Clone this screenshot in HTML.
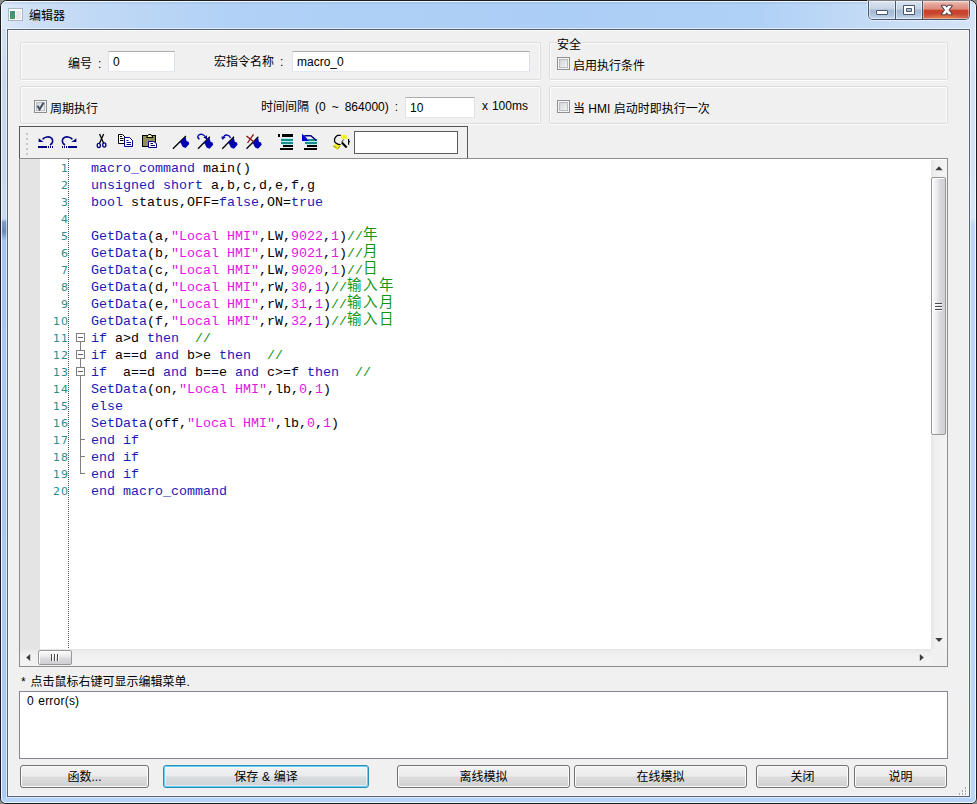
<!DOCTYPE html>
<html lang="zh-CN">
<head>
<meta charset="utf-8">
<title>编辑器</title>
<style>
html,body{margin:0;padding:0;}
body{width:977px;height:804px;overflow:hidden;background:#8c8c8c;position:relative;
 font-family:"Liberation Sans","Noto Sans CJK SC",sans-serif;font-size:12px;color:#000;word-spacing:2.67px;}
.abs{position:absolute;}
#frame{position:absolute;left:0;top:0;width:977px;height:804px;box-sizing:border-box;
 border:1px solid #1a1c22;border-radius:7px 7px 6px 6px;overflow:hidden;
 background:#b3d1f4;}
#frame:after{content:"";position:absolute;left:0;top:0;right:0;bottom:0;border:1px solid rgba(255,255,255,.8);border-radius:6px 6px 5px 5px;}
#titlegrad{position:absolute;left:0;top:0;width:975px;height:29px;
 background:linear-gradient(90deg,#dde9f8 0px,#cde0f6 30px,#c1d9f5 90px,#b1d1f6 230px,#abcef6 560px,#b0d1f6 760px,#c6dcf5 880px,#d6e5f7 975px);}
#titleshine{position:absolute;left:0;top:1px;width:975px;height:2px;background:rgba(120,150,190,.16);}
#sideL{position:absolute;left:0;top:28px;width:6px;height:774px;background:linear-gradient(180deg,#d2e0f2 0,#c6d8ee 60px,#c8daf0 188px,#c6d8ee 190px,#7d9cc6 193px,#6b8bb8 203px,#8eafd9 208px,#a6c6f1 212px,#abcbf4 774px);}
#sideR{position:absolute;left:969px;top:28px;width:6px;height:774px;background:linear-gradient(180deg,#d8e6f7 0,#d2e2f7 80px,#d6e5f8 188px,#d0e1f6 191px,#bcd8f6 195px,#b8d6f6 774px);}
#bottomG{position:absolute;left:0;top:797px;width:975px;height:5px;background:#b4d3f6;}
#client{position:absolute;left:7px;top:29px;width:963px;height:768px;box-sizing:border-box;
 border:1px solid #56637a;background:#f0f0f0;box-shadow:0 0 0 1px rgba(255,255,255,.55),inset 0 0 0 1px #f8f8f8;}
.lbl{position:absolute;white-space:nowrap;line-height:14px;height:14px;margin-top:1px;}
.gb{position:absolute;box-sizing:border-box;border:1px solid #dcdcdc;border-radius:2px;box-shadow:inset 1px 1px 0 #fcfcfc,inset -1px 0 0 #fcfcfc,0 1px 0 #fcfcfc;}
.inp{position:absolute;box-sizing:border-box;background:#fff;border:1px solid #e3e9ef;border-top-color:#abadb3;border-left-color:#e2e3ea;border-right-color:#dbdfe6;
 line-height:20px;padding-left:4px;white-space:nowrap;}
.cb{position:absolute;width:13px;height:13px;box-sizing:border-box;border:1px solid #8e8f8f;background:#f4f4f4;}
.cb i{position:absolute;left:1px;top:1px;width:9px;height:9px;box-sizing:border-box;border:1px solid #b8bcc0;background:linear-gradient(135deg,#d2d5d8 0,#f3f3f3 100%);}
.btn{word-spacing:0.4px;position:absolute;box-sizing:border-box;height:23px;border:1px solid #707070;border-radius:3px;
 background:linear-gradient(180deg,#f2f2f2 0,#ebebeb 48%,#dddddd 52%,#cfcfcf 100%);box-shadow:inset 0 0 0 1px #fcfcfc;
 text-align:center;line-height:23px;white-space:nowrap;overflow:hidden;}
.btn.def{border-color:#2e8cba;box-shadow:inset 0 0 0 1px #62d2f4,inset 0 0 0 2px rgba(255,255,255,.45);background:linear-gradient(180deg,#f1f3f4 0,#e9ebed 48%,#d9dde0 52%,#ccd2d6 100%);}
#editor{position:absolute;left:19px;top:158px;width:929px;height:509px;box-sizing:border-box;border:1px solid #8e8e8e;background:#fff;overflow:hidden;}
#code{word-spacing:0;position:absolute;left:0;top:0;font-family:"Liberation Mono","Noto Sans CJK SC",monospace;font-size:13.33px;}
.ln{position:absolute;left:0;width:49px;letter-spacing:1px;text-align:right;height:17px;line-height:17px;color:#2b8c8c;
 font-family:"DejaVu Sans","Liberation Sans",sans-serif;font-size:11px;}
.cl{position:absolute;left:71px;height:17px;line-height:17px;white-space:pre;color:#000;}
.z{font-size:14.5px;letter-spacing:1.5px;line-height:17px;position:relative;top:-1px;}
.k{color:#1a1ab8;} .s{color:#e614e6;} .n{color:#e614e6;} .c{color:#149614;}
</style>
</head>
<body>
<div id="frame">
 <div id="titlegrad"></div><div id="titleshine"></div>
 <div id="sideL"></div><div id="sideR"></div><div id="bottomG"></div>
</div>
<div id="client"></div>


<!-- app icon -->
<div class="abs" style="left:8px;top:8px;width:15px;height:13px;box-sizing:border-box;border:1px solid #aab6c4;background:#fafcfc;"></div>
<div class="abs" style="left:10px;top:11px;width:5px;height:8px;background:linear-gradient(180deg,#3f8f78,#4a9a66);"></div>
<div class="abs" style="left:16px;top:11px;width:5px;height:8px;background:#e6e8ea;"></div>
<!-- caption buttons -->
<div class="abs" id="capbtns" style="left:868px;top:1px;width:102px;height:19px;box-sizing:border-box;border:1px solid #46566e;border-top:none;border-radius:0 0 5px 5px;overflow:hidden;box-shadow:0 0 0 1px rgba(255,255,255,.45);">
 <div class="abs" style="left:0;top:0;width:26px;height:18px;background:linear-gradient(180deg,#dbe5f1 0,#c3d2e4 45%,#a3b9d3 50%,#b0c6de 80%,#cadbec 100%);box-shadow:inset 0 0 0 1px rgba(255,255,255,.5);"></div>
 <div class="abs" style="left:26px;top:0;width:1px;height:18px;background:#46566e;"></div>
 <div class="abs" style="left:27px;top:0;width:26px;height:18px;background:linear-gradient(180deg,#dbe5f1 0,#c3d2e4 45%,#a3b9d3 50%,#b0c6de 80%,#cadbec 100%);box-shadow:inset 0 0 0 1px rgba(255,255,255,.5);"></div>
 <div class="abs" style="left:53px;top:0;width:1px;height:18px;background:#46566e;"></div>
 <div class="abs" style="left:54px;top:0;width:46px;height:18px;background:radial-gradient(ellipse 20px 6px at 45% 100%,rgba(230,140,60,.75),rgba(230,140,60,0) 100%),linear-gradient(180deg,#f0c8c0 0,#e3a298 20%,#dc8a78 45%,#c8412e 52%,#c9452f 72%,#d8745c 100%);box-shadow:inset 0 0 0 1px rgba(255,255,255,.4);"></div>
</div>
<svg class="abs" style="left:868px;top:0;" width="102" height="20" viewBox="868 0 102 20">
 <rect x="876.500" y="10.500" width="11" height="4" fill="#fff" stroke="#4a566a" stroke-width="1" rx="0.5"/>
 <path d="M903.500 5.500 H914.500 V14.500 H903.500 Z M906.500 8.500 V11.500 H911.500 V8.500 Z" fill="#fff" fill-rule="evenodd" stroke="#4a566a" stroke-width="1"/>
 <path d="M941.9 5.8 L945.3 5.8 L951.7 14.2 L948.3 14.2 Z M948.3 5.8 L951.7 5.8 L945.3 14.2 L941.9 14.2 Z" fill="none" stroke="#54404a" stroke-width="2" stroke-linejoin="round"/><path d="M941.9 5.8 L945.3 5.8 L951.7 14.2 L948.3 14.2 Z M948.3 5.8 L951.7 5.8 L945.3 14.2 L941.9 14.2 Z" fill="#fff"/>
</svg>
<!-- title -->
<div class="lbl" style="left:29px;top:8px;">编辑器</div>

<!-- group boxes -->
<div class="gb" style="left:20px;top:42px;width:521px;height:38px;"></div>
<div class="gb" style="left:20px;top:86px;width:521px;height:38px;"></div>
<div class="gb" style="left:549px;top:42px;width:399px;height:38px;"></div>
<div class="gb" style="left:549px;top:86px;width:399px;height:38px;"></div>

<div class="lbl" style="left:68px;top:56px;">编号 :</div>
<div class="inp" style="left:108px;top:51px;width:67px;height:21px;">0</div>
<div class="lbl" style="left:214px;top:54px;">宏指令名称 :</div>
<div class="inp" style="left:292px;top:51px;width:238px;height:21px;">macro_0</div>

<div class="lbl" style="left:557px;top:37px;background:#f0f0f0;">安全</div>
<div class="cb" style="left:557px;top:57px;"><i></i></div>
<div class="lbl" style="left:573px;top:58px;">启用执行条件</div>

<div class="cb" style="left:34px;top:100px;"><i></i><svg class="abs" style="left:0;top:0" width="11" height="11" viewBox="0 0 11 11"><path d="M2.500 4.800 L4.600 8.300 L8.600 1.800" fill="none" stroke="#414d66" stroke-width="1.9"/></svg></div>
<div class="lbl" style="left:50px;top:101px;">周期执行</div>
<div class="lbl" style="left:261px;top:99px;">时间间隔 (0 ~ 864000) :</div>
<div class="inp" style="left:405px;top:97px;width:70px;height:21px;">10</div>
<div class="lbl" style="left:482px;top:98px;word-spacing:0.6px;">x 100ms</div>
<div class="cb" style="left:557px;top:100px;"><i></i></div>
<div class="lbl" style="left:573px;top:101px;word-spacing:0;">当 HMI 启动时即执行一次</div>

<!-- toolbar -->
<div class="abs" id="toolbar" style="left:19px;top:126px;width:449px;height:33px;box-sizing:border-box;border:1px solid #565656;border-bottom:none;background:#f0f0f0;"></div>

<div class="abs" id="tbinput" style="left:354px;top:131px;width:104px;height:23px;box-sizing:border-box;border:1px solid #5c5c5c;background:#fff;"></div>
<svg class="abs" style="left:0;top:0;" width="977" height="804" viewBox="0 0 977 804">
<!-- gripper -->
<g fill="#c6c6c6"><rect x="26" y="133" width="2" height="2"/><rect x="26" y="138" width="2" height="2"/><rect x="26" y="143" width="2" height="2"/><rect x="26" y="148" width="2" height="2"/><rect x="26" y="153" width="2" height="2"/></g>
<!-- undo -->
<g id="undo">
<path d="M42.600 139.400 C44 136.800 49.500 135.900 51.800 138.400 C53.600 140.800 52.600 143.400 50 145" fill="none" stroke="#000080" stroke-width="1.6"/>
<path d="M38.600 138.300 L38.600 142 L43.600 142 Z" fill="#000080"/>
<rect x="38" y="146" width="9" height="2" fill="#000080"/>
<rect x="48" y="146" width="1" height="2" fill="#000080"/><rect x="50" y="146" width="1" height="2" fill="#000080"/><rect x="52" y="146" width="1" height="2" fill="#000080"/>
</g>
<!-- redo (mirror about x=57.5) -->
<g transform="translate(115,0) scale(-1,1)">
<path d="M42.600 139.400 C44 136.800 49.500 135.900 51.800 138.400 C53.600 140.800 52.600 143.400 50 145" fill="none" stroke="#000080" stroke-width="1.6"/>
<path d="M38.600 138.300 L38.600 142 L43.600 142 Z" fill="#000080"/>
<rect x="38" y="146" width="9" height="2" fill="#000080"/>
<rect x="48" y="146" width="1" height="2" fill="#000080"/><rect x="50" y="146" width="1" height="2" fill="#000080"/><rect x="52" y="146" width="1" height="2" fill="#000080"/>
</g>
<!-- cut -->
<g fill="none" stroke-width="1.3">
<path d="M99.600 134 L103.700 143.400 M103.700 134 L99.400 143.400" stroke="#000"/>
<ellipse cx="98.800" cy="145.500" rx="1.600" ry="2.100" stroke="#000080"/>
<ellipse cx="104.300" cy="145" rx="1.600" ry="2.100" stroke="#000080"/>
</g>
<!-- copy -->
<g stroke-width="1">
<path d="M118.500 134.500 H122.500 L125.500 137.500 V143.500 H118.500 Z" fill="#fff" stroke="#000"/>
<path d="M120 136.500 H122 M120 138.500 H123.500 M120 140.500 H123.500" stroke="#000"/>
<path d="M124.500 137.500 H129.500 L132.500 140.500 V146.500 H124.500 Z" fill="#fff" stroke="#000080"/>
<path d="M126.500 140.500 H128.500 M126.500 142.500 H131 M126.500 144.500 H131" stroke="#000080"/>
</g>
<!-- paste -->
<g stroke-width="1">
<rect x="142.500" y="135.500" width="13" height="11" fill="#8e8e58" stroke="#000"/>
<path d="M146.500 137.500 L148.500 134.500 H151 L153 137.500 Z" fill="#f6f6b8" stroke="#000"/>
<path d="M148.500 141.500 H153.500 L156.500 143.500 V147.500 H148.500 Z" fill="#fff" stroke="#000080"/>
<path d="M150.500 143.500 H153 M150.500 145.500 H155" stroke="#000080"/>
</g>
<!-- flag 1 -->
<g id="flag">
<path d="M172.900 148.700 L185.900 136" stroke="#000" stroke-width="1.3" fill="none"/>
<path d="M185.5 136.8 L186.5 141.0 L188.6 141.8 L189.2 144.0 L185.6 147.9 L182.6 146.8 L181.0 143.4 L180.0 141.9 Z" fill="#0000b4"/>
</g>
<!-- flag 2: next -->
<g>
<path d="M198 148.700 L209.800 136.800" stroke="#000" stroke-width="1.3" fill="none"/>
<path d="M209.5 137.6 L210.5 141.8 L212.6 142.6 L213.2 144.8 L209.6 148.7 L206.6 147.6 L205.0 144.2 L204.0 142.7 Z" fill="#0000b4"/>
<path d="M199.500 139.300 C196 137 198.500 133.800 202 134.300 C203.500 134.600 204.500 135.500 205 136.500" stroke="#0000a0" stroke-width="1.3" fill="none"/>
<path d="M203.300 137.600 L207 135.200 L207 139.400 Z" fill="#0000a0"/>
</g>
<!-- flag 3: prev -->
<g>
<path d="M222.300 148.700 L234 136.800" stroke="#000" stroke-width="1.3" fill="none"/>
<path d="M233.8 137.6 L234.8 141.8 L236.9 142.6 L237.5 144.8 L233.9 148.7 L230.9 147.6 L229.3 144.2 L228.3 142.7 Z" fill="#0000b4"/>
<path d="M223.500 137 C225 134 229.500 134.500 230.500 138" stroke="#0000b4" stroke-width="1.3" fill="none"/>
<path d="M221.300 136.500 L225.800 137 L222.300 140 Z" fill="#0000b4"/>
</g>
<!-- flag 4: clear -->
<g>
<path d="M246.500 148.700 L258.300 136.800" stroke="#000" stroke-width="1.3" fill="none"/>
<path d="M258.0 137.6 L259.0 141.8 L261.1 142.6 L261.7 144.8 L258.1 148.7 L255.1 147.6 L253.5 144.2 L252.5 142.7 Z" fill="#0000b4"/>
<path d="M246.500 136 L254 142 M253.500 134.300 L247.500 143" stroke="#8c1010" stroke-width="1.3" fill="none"/>
</g>
<!-- indent -->
<g shape-rendering="crispEdges">
<rect x="278" y="134" width="2" height="3" fill="#000"/>
<rect x="282" y="134" width="11" height="3" fill="#000"/>
<rect x="281" y="138" width="12" height="7" fill="#b4f2f2"/>
<rect x="281" y="139" width="12" height="2" fill="#1a8c8c"/>
<rect x="281" y="142" width="12" height="2" fill="#1a8c8c"/>
<rect x="283" y="145" width="10" height="2" fill="#000"/>
<rect x="280" y="148" width="13" height="2" fill="#000"/>
</g>
<!-- outdent -->
<g>
<g shape-rendering="crispEdges">
<rect x="305" y="141" width="12" height="4" fill="#b4f2f2"/>
<rect x="308" y="139" width="9" height="2" fill="#1a8c8c"/>
<rect x="305" y="142" width="12" height="2" fill="#1a8c8c"/>
<rect x="307" y="145" width="10" height="2" fill="#000"/>
<rect x="304" y="148" width="13" height="2" fill="#000"/>
</g>
<path d="M302 133.800 L302 140.900 L308.800 140.900 L306.600 138 L304.800 136.200 Z" fill="#0000d0"/>
<path d="M304.300 135.700 H310.800 L316.400 140.500" fill="none" stroke="#000080" stroke-width="1.500"/>
</g>
<!-- find/replace -->
<g fill="none">
<path d="M341.500 134.500 L346.500 135.300 L348.200 139.600 L345.200 138.600 L343 139.800 L341.300 138.200 Z" fill="#f2f224"/>
<path d="M332.800 145.600 L337 143.400 L340.600 144.800 L339.200 148.200 L336.200 149.600 Z" fill="#f2f224"/>
<path d="M340.800 135.300 L337.600 135.300 C335.200 137 334.200 139.400 334.600 141.400 C335.400 143.400 337.400 144.200 340.600 144.600" stroke="#000" stroke-width="1.3"/>
<path d="M341.800 142.400 L346.700 147.500" stroke="#000" stroke-width="2.1"/>
<path d="M343.600 139.600 L341.600 142.200" stroke="#222" stroke-width="1"/>
<path d="M348.600 139 V144.700 M348.600 141.600 H349.800" stroke="#000" stroke-width="1.2"/>
<path d="M333.300 146.200 L336.600 147.700 M337.300 149.300 L340 146" stroke="#8c8c00" stroke-width="1"/>
</g>
</svg>

<!-- editor -->
<div id="editor">
<div class="abs" style="left:0;top:0;width:20px;height:490px;background:#e4e4e4;"></div>
<div class="abs" id="dots" style="left:48px;top:0;width:1px;height:490px;background:repeating-linear-gradient(180deg,#4a5a5a 0,#4a5a5a 1px,transparent 1px,transparent 2px);"></div>

<!-- fold margin -->
<svg class="abs" style="left:0;top:0;" width="120" height="490" viewBox="20 159 120 490" shape-rendering="crispEdges">
<g stroke="#808080" stroke-width="1" fill="#fff">
<path d="M80.500 342 V473.500 H85" fill="none"/>
<path d="M80.500 439.500 H85 M80.500 456.500 H85" fill="none"/>
<rect x="76.500" y="333.500" width="8" height="8"/>
<rect x="76.500" y="350.500" width="8" height="8"/>
<rect x="76.500" y="367.500" width="8" height="8"/>
<path d="M78 337.500 H83 M78 354.500 H83 M78 371.500 H83" stroke="#606060"/>
</g>
</svg>
<!-- vertical scrollbar -->
<div class="abs" style="left:911px;top:1px;width:16px;height:489px;background:linear-gradient(90deg,#e6e6e6 0,#f0f0f0 5px,#f3f3f3 16px);"></div>
<div class="abs" style="left:911px;top:18px;width:15px;height:258px;box-sizing:border-box;border:1px solid #979797;border-radius:2px;background:linear-gradient(90deg,#fcfcfc 0,#ececee 38%,#d9d9dd 62%,#cfcfd4 100%);box-shadow:inset 1px 1px 0 #fff;"></div>
<svg class="abs" style="left:911px;top:0;" width="16" height="490" viewBox="931 159 16 490">
<path d="M935.300 170.300 L939 166.300 L942.700 170.300 Z" fill="#3c3c3c"/>
<path d="M935.300 638 L939 642 L942.700 638 Z" fill="#3c3c3c"/>
<g shape-rendering="crispEdges" fill="#4a4a4a"><rect x="935" y="303" width="7" height="1"/><rect x="935" y="306" width="7" height="1"/><rect x="935" y="309" width="7" height="1"/></g>
<g shape-rendering="crispEdges" fill="#fff"><rect x="935" y="304" width="7" height="1"/><rect x="935" y="307" width="7" height="1"/><rect x="935" y="310" width="7" height="1"/></g>
</svg>
<!-- horizontal scrollbar -->
<div class="abs" style="left:0;top:490px;width:911px;height:17px;background:linear-gradient(180deg,#e6e6e6 0,#f0f0f0 5px,#f3f3f3 17px);"></div>
<div class="abs" style="left:911px;top:490px;width:16px;height:17px;background:#f0f0f0;"></div>
<div class="abs" style="left:18px;top:491px;width:34px;height:15px;box-sizing:border-box;border:1px solid #979797;border-radius:2px;background:linear-gradient(180deg,#fcfcfc 0,#ececee 38%,#d9d9dd 62%,#cfcfd4 100%);box-shadow:inset 1px 1px 0 #fff;"></div>
<svg class="abs" style="left:0;top:490px;" width="927" height="17" viewBox="20 649 927 17">
<path d="M30.200 654 L26.200 657.500 L30.200 661 Z" fill="#3c3c3c"/>
<path d="M919.800 654 L923.800 657.500 L919.800 661 Z" fill="#3c3c3c"/>
<g shape-rendering="crispEdges" fill="#4a4a4a"><rect x="51" y="654" width="1" height="7"/><rect x="54" y="654" width="1" height="7"/><rect x="57" y="654" width="1" height="7"/></g>
<g shape-rendering="crispEdges" fill="#fff"><rect x="52" y="654" width="1" height="7"/><rect x="55" y="654" width="1" height="7"/><rect x="58" y="654" width="1" height="7"/></g>
</svg>
<div id="code">
<div class="ln" style="top:1px">1</div><div class="cl" style="top:1px"><span class="k">macro_command</span> main()</div>
<div class="ln" style="top:18px">2</div><div class="cl" style="top:18px"><span class="k">unsigned short</span> a,b,c,d,e,f,g</div>
<div class="ln" style="top:35px">3</div><div class="cl" style="top:35px"><span class="k">bool</span> status,OFF=<span class="k">false</span>,ON=<span class="k">true</span></div>
<div class="ln" style="top:52px">4</div><div class="cl" style="top:52px"></div>
<div class="ln" style="top:69px">5</div><div class="cl" style="top:69px"><span class="k">GetData</span>(a,<span class="s">"Local HMI"</span>,LW,<span class="s">9022</span>,<span class="s">1</span>)<span class="c">//<span class="z">年</span></span></div>
<div class="ln" style="top:86px">6</div><div class="cl" style="top:86px"><span class="k">GetData</span>(b,<span class="s">"Local HMI"</span>,LW,<span class="s">9021</span>,<span class="s">1</span>)<span class="c">//<span class="z">月</span></span></div>
<div class="ln" style="top:103px">7</div><div class="cl" style="top:103px"><span class="k">GetData</span>(c,<span class="s">"Local HMI"</span>,LW,<span class="s">9020</span>,<span class="s">1</span>)<span class="c">//<span class="z">日</span></span></div>
<div class="ln" style="top:120px">8</div><div class="cl" style="top:120px"><span class="k">GetData</span>(d,<span class="s">"Local HMI"</span>,rW,<span class="s">30</span>,<span class="s">1</span>)<span class="c">//<span class="z">输入年</span></span></div>
<div class="ln" style="top:137px">9</div><div class="cl" style="top:137px"><span class="k">GetData</span>(e,<span class="s">"Local HMI"</span>,rW,<span class="s">31</span>,<span class="s">1</span>)<span class="c">//<span class="z">输入月</span></span></div>
<div class="ln" style="top:154px">10</div><div class="cl" style="top:154px"><span class="k">GetData</span>(f,<span class="s">"Local HMI"</span>,rW,<span class="s">32</span>,<span class="s">1</span>)<span class="c">//<span class="z">输入日</span></span></div>
<div class="ln" style="top:171px">11</div><div class="cl" style="top:171px"><span class="k">if</span> a&gt;d <span class="k">then</span>  <span class="c">//</span></div>
<div class="ln" style="top:188px">12</div><div class="cl" style="top:188px"><span class="k">if</span> a==d <span class="k">and</span> b&gt;e <span class="k">then</span>  <span class="c">//</span></div>
<div class="ln" style="top:205px">13</div><div class="cl" style="top:205px"><span class="k">if</span>  a==d <span class="k">and</span> b==e <span class="k">and</span> c&gt;=f <span class="k">then</span>  <span class="c">//</span></div>
<div class="ln" style="top:222px">14</div><div class="cl" style="top:222px"><span class="k">SetData</span>(on,<span class="s">"Local HMI"</span>,lb,<span class="s">0</span>,<span class="s">1</span>)</div>
<div class="ln" style="top:239px">15</div><div class="cl" style="top:239px"><span class="k">else</span></div>
<div class="ln" style="top:256px">16</div><div class="cl" style="top:256px"><span class="k">SetData</span>(off,<span class="s">"Local HMI"</span>,lb,<span class="s">0</span>,<span class="s">1</span>)</div>
<div class="ln" style="top:273px">17</div><div class="cl" style="top:273px"><span class="k">end if</span></div>
<div class="ln" style="top:290px">18</div><div class="cl" style="top:290px"><span class="k">end if</span></div>
<div class="ln" style="top:307px">19</div><div class="cl" style="top:307px"><span class="k">end if</span></div>
<div class="ln" style="top:324px">20</div><div class="cl" style="top:324px"><span class="k">end macro_command</span></div>
</div>
</div>

<div class="lbl" style="left:21px;top:674px;word-spacing:1.6px;">* 点击鼠标右键可显示编辑菜单.</div>
<div class="abs" style="left:19px;top:691px;width:929px;height:68px;box-sizing:border-box;border:1px solid #828790;background:#fff;"></div>
<div class="lbl" style="left:27px;top:693px;word-spacing:0.8px;letter-spacing:0.22px;">0 error(s)</div>

<!-- size grip -->
<svg class="abs" style="left:956px;top:784px;" width="12" height="12" viewBox="956 784 12 12" shape-rendering="crispEdges"><rect x="966" y="787" width="1" height="2" fill="#fbfbfb"/><rect x="965" y="787" width="1" height="2" fill="#aaa6a6"/><rect x="966" y="790" width="1" height="2" fill="#fbfbfb"/><rect x="965" y="790" width="1" height="2" fill="#aaa6a6"/><rect x="966" y="793" width="1" height="2" fill="#fbfbfb"/><rect x="965" y="793" width="1" height="2" fill="#aaa6a6"/><rect x="963" y="790" width="1" height="2" fill="#fbfbfb"/><rect x="962" y="790" width="1" height="2" fill="#aaa6a6"/><rect x="963" y="793" width="1" height="2" fill="#fbfbfb"/><rect x="962" y="793" width="1" height="2" fill="#aaa6a6"/><rect x="960" y="793" width="1" height="2" fill="#fbfbfb"/><rect x="959" y="793" width="1" height="2" fill="#aaa6a6"/></svg>
<!-- buttons -->
<div class="btn" style="left:20px;top:765px;width:129px;">函数...</div>
<div class="btn def" style="left:163px;top:765px;width:206px;">保存 &amp; 编译</div>
<div class="btn" style="left:397px;top:765px;width:173px;">离线模拟</div>
<div class="btn" style="left:574px;top:765px;width:173px;">在线模拟</div>
<div class="btn" style="left:756px;top:765px;width:93px;">关闭</div>
<div class="btn" style="left:854px;top:765px;width:93px;">说明</div>
</body>
</html>
